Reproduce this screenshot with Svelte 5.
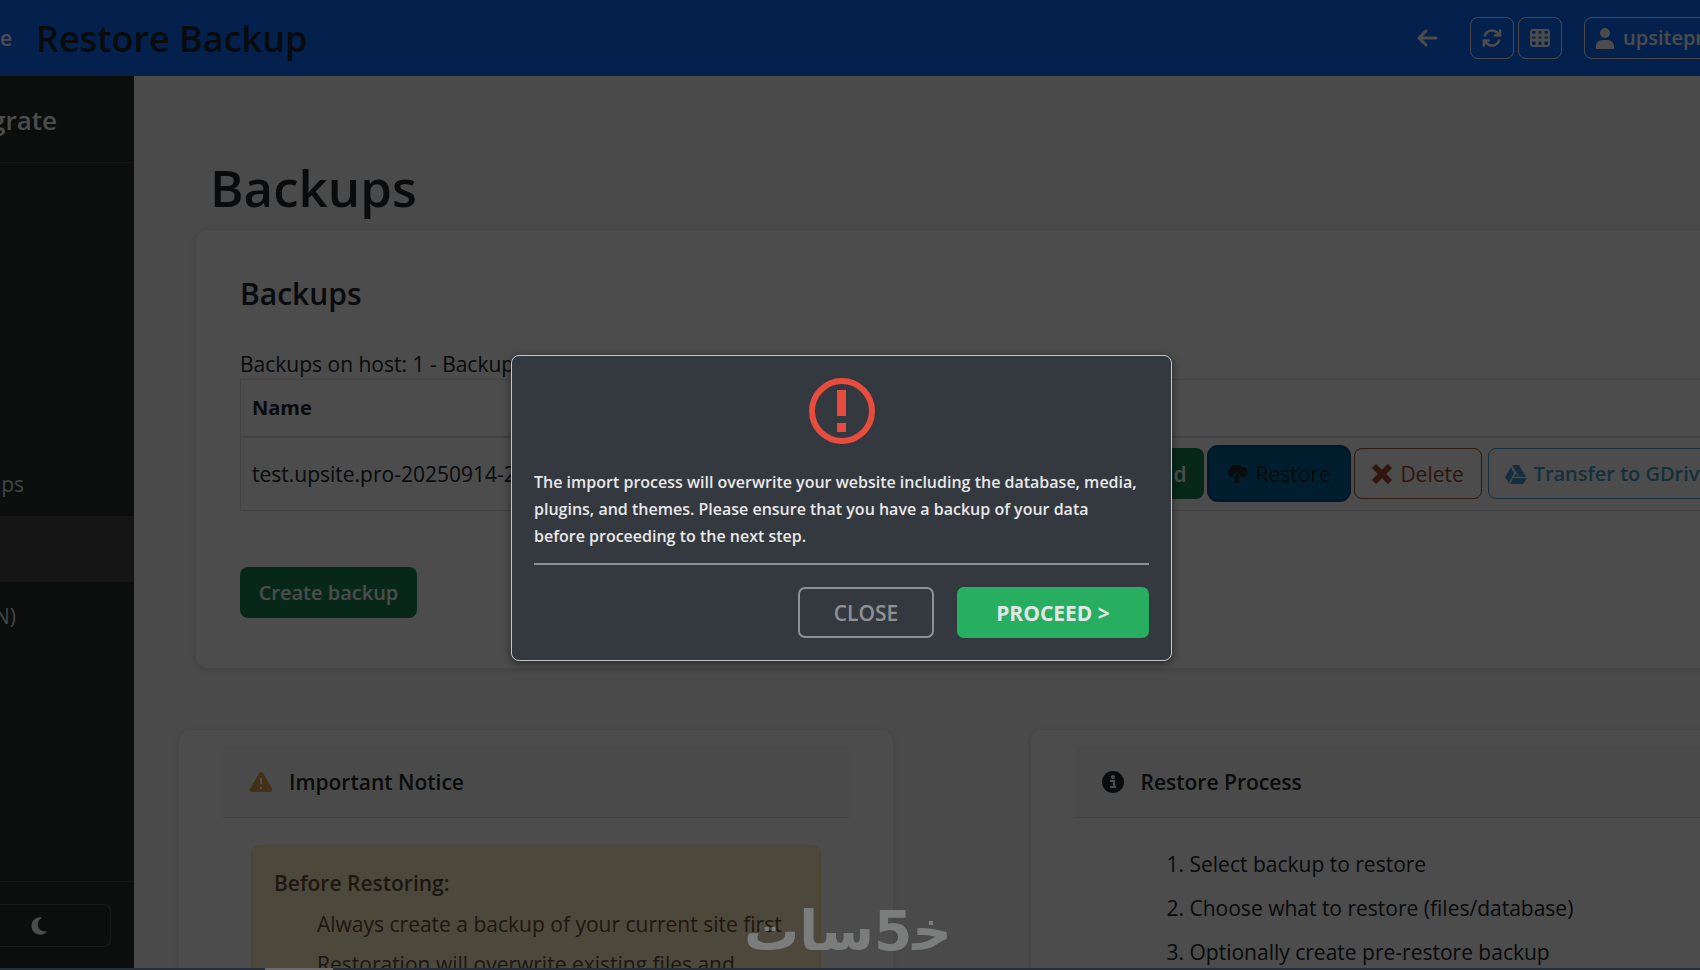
<script>
  const navItems = [
    { label: 'ups', active: false },
    { label: '', active: true },
    { label: 'N)', active: false }
  ];

  const notices = [
    'Always create a backup of your current site first',
    'Restoration will overwrite existing files and'
  ];

  const steps = [
    'Select backup to restore',
    'Choose what to restore (files/database)',
    'Optionally create pre-restore backup'
  ];

  let modalOpen = $state(true);

  function closeModal() {
    modalOpen = false;
  }
</script>

<div class="page">
  <header class="topbar">
    <div class="brand"><span>te</span></div>
    <h1>Restore Backup</h1>
    <nav class="actions">
      <a class="back" href="#back" aria-label="Back">
        <svg viewBox="0 0 22 18" width="22" height="18">
          <path d="M20 9H3M10 2L3 9l7 7" fill="none" stroke="currentColor" stroke-width="3" stroke-linecap="round" stroke-linejoin="round" />
        </svg>
      </a>
      <button class="tool" aria-label="Refresh">
        <svg viewBox="0 0 512 512" width="20" height="20">
          <path fill="currentColor" d="M105.100 202.600c7.700-21.800 20.200-42.300 37.800-59.800c62.500-62.500 163.800-62.500 226.300 0L386.300 160H336c-17.700 0-32 14.300-32 32s14.300 32 32 32H463.500c17.700 0 32-14.300 32-32V64c0-17.700-14.300-32-32-32s-32 14.300-32 32v51.200L414.400 97.600c-87.500-87.500-229.300-87.500-316.800 0C73.200 122 55.600 150.700 44.800 181.400c-5.900 16.700 2.900 34.900 19.500 40.800s34.900-2.900 40.800-19.500zM39 289.300c-5 1.500-9.800 4.200-13.700 8.200c-4 4-6.700 8.800-8.100 14c-.8 3.400-1.200 6.900-1.200 10.500V448c0 17.700 14.300 32 32 32s32-14.300 32-32V396.900l17.600 17.500c87.500 87.400 229.300 87.400 316.700 0c24.400-24.400 42.100-53.100 52.900-83.700c5.900-16.700-2.900-34.900-19.500-40.800s-34.900 2.900-40.800 19.500c-7.700 21.800-20.200 42.300-37.800 59.800c-62.500 62.500-163.800 62.500-226.300 0L125.600 352H176c17.700 0 32-14.300 32-32s-14.300-32-32-32H48.400c-3.200 0-6.400.4-9.400 1.300z" />
        </svg>
      </button>
      <button class="tool" aria-label="Apps">
        <svg viewBox="0 0 20 18" width="20" height="18">
          <rect x="1" y="1" width="18" height="16" rx="2" fill="none" stroke="currentColor" stroke-width="2" />
          <path d="M1 6h18M1 11h18M7 1v16M13 1v16" stroke="currentColor" stroke-width="3" />
        </svg>
      </button>
      <button class="user">
        <svg viewBox="0 0 18 21" width="18" height="21">
          <circle cx="9" cy="5" r="5" fill="currentColor" />
          <path d="M0 21v-3c0-3 3-6 6-6h6c3 0 6 3 6 6v3z" fill="currentColor" />
        </svg>
        <span>upsitepro</span>
      </button>
    </nav>
  </header>

  <div class="body">
    <aside>
      <div class="side-title">grate</div>
      <nav class="side-nav">
        {#each navItems as item}
          <a href="#nav" class:active={item.active} aria-label={item.label || 'Current page'}>{item.label}</a>
        {/each}
      </nav>
      <div class="side-foot">
        <button aria-label="Toggle theme">
          <svg viewBox="0 0 384 512" width="16" height="20">
            <path fill="currentColor" d="M223.500 32C100 32 0 132.300 0 256S100 480 223.500 480c60.600 0 115.500-24.200 155.800-63.400c5-4.900 6.300-12.500 3.100-18.700s-10.100-9.700-17-8.500c-9.800 1.700-19.800 2.600-30.100 2.600c-96.900 0-175.500-78.800-175.500-176c0-65.800 36-123.100 89.300-153.300c6.100-3.500 9.200-10.500 7.700-17.300s-7.300-11.900-14.300-12.500c-6.300-.5-12.600-.8-19-.8z" />
          </svg>
        </button>
      </div>
    </aside>

    <main>
      <h2>Backups</h2>

      <section class="card backups">
        <h3>Backups</h3>
        <p>Backups on host: 1 - Backup</p>
        <table>
          <thead>
            <tr><th class="name">Name</th><th></th></tr>
          </thead>
          <tbody>
            <tr>
              <td class="name">test.upsite.pro-20250914-2</td>
              <td>
                <div class="row-actions">
                  <button class="btn green">d</button>
                  <button class="btn restore">
                    <svg viewBox="0 0 22 18" width="22" height="18">
                      <path fill="currentColor" d="M5 12a5 5 0 0 1-1-9 7 7 0 0 1 12-1 5 5 0 0 1 1 10h-1l-5-5-5 5z" />
                      <path fill="currentColor" d="M11 9l4 4h-2v5H9v-5H7z" />
                    </svg>
                    Restore
                  </button>
                  <button class="btn delete">
                    <svg viewBox="0 0 22 22" width="22" height="22">
                      <path d="M3 3l16 16M19 3L3 19" stroke="currentColor" stroke-width="6" />
                    </svg>
                    Delete
                  </button>
                  <button class="btn drive">
                    <svg viewBox="0 0 22 20" width="22" height="20">
                      <path fill="currentColor" d="M7 1h7l7 12h-7zM6 3l3 6-5 10-4-6zM8 14h14l-4 6H5zM11 9l2 4h-4z" />
                    </svg>
                    Transfer to GDrive
                  </button>
                </div>
              </td>
            </tr>
          </tbody>
        </table>
        <button class="btn green create">Create backup</button>
      </section>

      <div class="columns">
        <section class="card info">
          <h4>
            <svg class="warn" viewBox="0 0 24 20" width="24" height="20">
              <path fill="currentColor" d="M10 1q2-2 4 0l9 16q1 3-2 3H3q-3 0-2-3z" />
              <path d="M12 6v6M12 15v2" stroke="#fff" stroke-width="2" />
            </svg>
            Important Notice
          </h4>
          <div class="alert">
            <strong>Before Restoring:</strong>
            <ul>
              {#each notices as notice}
                <li>{notice}</li>
              {/each}
            </ul>
          </div>
        </section>

        <section class="card info">
          <h4>
            <svg viewBox="0 0 24 24" width="24" height="24">
              <circle cx="12" cy="12" r="11" fill="currentColor" />
              <circle cx="12" cy="7" r="2" fill="#fff" />
              <path d="M9 11h4v6M9 17h6" fill="none" stroke="#fff" stroke-width="2" />
            </svg>
            Restore Process
          </h4>
          <ol>
            {#each steps as step}
              <li>{step}</li>
            {/each}
          </ol>
        </section>
      </div>
    </main>
  </div>

  {#if modalOpen}
    <div class="overlay">
      <div class="modal" role="dialog" aria-modal="true" aria-describedby="modal-text">
        <svg class="alert-icon" viewBox="0 0 66 66" width="66" height="66">
          <circle cx="33" cy="33" r="30" fill="none" stroke="#e74c3c" stroke-width="6" />
          <path d="M28 12h9v26h-9zM28 45h9v9h-9z" fill="#e74c3c" />
        </svg>
        <p id="modal-text">
          The import process will overwrite your website including the database, media,
          plugins, and themes. Please ensure that you have a backup of your data<br />
          before proceeding to the next step.
        </p>
        <div class="modal-actions">
          <button class="close" onclick={closeModal}>CLOSE</button>
          <button class="proceed" onclick={closeModal}>PROCEED &gt;</button>
        </div>
      </div>
    </div>
  {/if}

  <div class="watermark" dir="rtl">خ&zwj;5سات</div>
  <div class="progress"><span></span></div>
</div>

<style>
  :global(body) {
    margin: 0;
    font-family: 'Open Sans', 'Noto Sans', sans-serif;
    font-size: 21px;
    line-height: 30px;
    color: #212529;
  }

  .page {
    position: relative;
    display: flex;
    flex-direction: column;
    height: 100vh;
    overflow: hidden;
    background: #f8f8f8;
  }

  .page * {
    box-sizing: border-box;
  }

  button {
    font: inherit;
    cursor: pointer;
  }

  h1, h2, h3, h4, p {
    margin: 0;
  }

  svg {
    display: block;
    flex: none;
  }

  .topbar {
    display: flex;
    flex: none;
    align-items: center;
    height: 76px;
    overflow: hidden;
    background: #0d6efd;
    color: #fff;
  }

  .brand {
    display: flex;
    justify-content: flex-end;
    width: 12px;
    overflow: hidden;
    font-weight: 600;
  }

  h1 {
    margin-left: 24px;
    padding-top: 2px;
    font-size: 36px;
    font-weight: 600;
    line-height: 50px;
    color: #212529;
  }

  .actions {
    display: flex;
    align-items: center;
    margin-left: auto;
    margin-right: -48px;
  }

  .back {
    margin-right: 32px;
    color: #fff;
  }

  .tool,
  .user {
    display: flex;
    align-items: center;
    justify-content: center;
    height: 42px;
    padding: 0;
    border: 1px solid #f8f9fa;
    border-radius: 8px;
    background: none;
    color: #fff;
  }

  .tool {
    width: 44px;
    margin-right: 4px;
  }

  .user {
    gap: 9px;
    width: 164px;
    margin-left: 18px;
    padding-left: 11px;
    justify-content: flex-start;
    font-size: 20px;
    font-weight: 600;
  }

  .body {
    display: flex;
    flex: 1;
    min-height: 0;
  }

  aside {
    display: flex;
    flex: none;
    flex-direction: column;
    width: 134px;
    overflow: hidden;
    background: #282e2c;
    color: #fff;
  }

  .side-title {
    display: flex;
    align-items: center;
    justify-content: flex-end;
    height: 87px;
    padding: 2px 77px 0 0;
    border-bottom: 1px solid #454545;
    font-size: 26px;
    font-weight: 600;
  }

  .side-nav {
    margin-top: 287px;
  }

  .side-nav a {
    display: flex;
    align-items: center;
    width: 24px;
    height: 66px;
    padding-top: 2px;
    justify-content: flex-end;
    color: #dee2e6;
    text-decoration: none;
  }

  .side-nav a.active {
    width: 100%;
    background: #4b4646;
  }

  .side-nav a:last-child {
    width: 16px;
  }

  .side-foot {
    margin-top: auto;
    padding: 22px 23px 23px 0;
    border-top: 1px solid #454545;
  }

  .side-foot button {
    display: flex;
    align-items: center;
    width: 100%;
    height: 43px;
    padding: 0 0 0 31px;
    border: 1px solid #5c5555;
    border-left: 0;
    border-radius: 0 8px 8px 0;
    background: none;
    color: #fff;
  }

  main {
    flex: 1;
    min-width: 0;
    padding: 77px 0 0 44px;
    overflow: hidden;
  }

  h2 {
    margin-left: 32px;
    font-size: 51px;
    font-weight: 600;
    line-height: 68px;
  }

  .card {
    border: 1px solid #ececec;
    border-radius: 12px;
    background: #fdfdfd;
    box-shadow: 0 2px 6px rgba(0, 0, 0, 0.1);
  }

  .backups {
    height: 440px;
    margin: 8px -48px 0 17px;
    padding: 41px 44px 0;
  }

  h3 {
    margin-bottom: 32px;
    font-size: 30px;
    font-weight: 600;
    line-height: 46px;
  }

  table {
    width: 100%;
    border: 1px solid #dee2e6;
    border-collapse: collapse;
    table-layout: fixed;
  }

  th, td {
    padding: 0;
    text-align: left;
    white-space: nowrap;
  }

  th {
    height: 57px;
    border-bottom: 2px solid #dee2e6;
    font-size: 20px;
    font-weight: 700;
  }

  td {
    height: 74px;
  }

  .name {
    width: 800px;
    padding-left: 11px;
  }

  .row-actions {
    display: flex;
    gap: 6px;
    margin-left: 116px;
  }

  .btn {
    display: inline-flex;
    flex: none;
    align-items: center;
    justify-content: center;
    gap: 7px;
    height: 51px;
    padding: 0 16px;
    border: 1px solid transparent;
    border-radius: 8px;
    font-weight: 600;
    white-space: nowrap;
  }

  .green {
    background: #198754;
    color: #fff;
  }

  .restore {
    width: 138px;
    background: #04669e;
    color: #212529;
    box-shadow: 0 0 0 3px #04538a;
    font-weight: 400;
  }

  .delete {
    width: 128px;
    border-color: #a3542f;
    background: none;
    color: #a3452b;
    font-weight: 400;
  }

  .drive {
    border-color: #4a9fd0;
    background: none;
    color: #4a9fd0;
    font-size: 20px;
  }

  .create {
    width: 177px;
    margin-top: 56px;
    font-size: 20px;
  }

  .columns {
    display: grid;
    grid-template-columns: 1fr 1fr;
    gap: 136px;
    margin: 60px -45px 0 0;
  }

  .info {
    height: 400px;
    padding: 16px 44px;
  }

  h4 {
    display: flex;
    align-items: center;
    gap: 16px;
    height: 72px;
    padding-left: 26px;
    border-bottom: 1px solid #e2e2e2;
    background: #f7f7f7;
    font-size: 21px;
    font-weight: 600;
  }

  .warn {
    color: #e0a04c;
  }

  .alert {
    height: 300px;
    margin: 27px 28px 0;
    padding: 22px 22px 0;
    border: 1px solid #ffe69c;
    border-radius: 8px;
    background: #fff0c8;
    color: #664d3a;
  }

  .alert strong {
    font-weight: 600;
  }

  ul, ol {
    margin: 0;
    padding: 0;
    list-style: none;
  }

  ul {
    margin: 6px -22px 0 43px;
  }

  ul li {
    line-height: 40px;
    white-space: nowrap;
  }

  ol {
    margin: 24px 0 0 115px;
    list-style: decimal;
  }

  ol li {
    line-height: 44px;
  }

  .overlay {
    position: absolute;
    inset: 0;
    display: flex;
    align-items: center;
    justify-content: center;
    padding: 45px 17px 0 0;
    background: rgba(0, 0, 0, 0.7);
  }

  .modal {
    width: 661px;
    max-width: 100%;
    padding: 22px;
    border: 1px solid #c4c8ca;
    border-radius: 8px;
    background: #343940;
    box-shadow: 0 2px 8px rgba(0, 0, 0, 0.5);
    color: #e8e8e8;
  }

  .alert-icon {
    margin: 0 auto 25px;
  }

  .modal p {
    padding-bottom: 13px;
    border-bottom: 2px solid #8f9295;
    font-size: 16px;
    font-weight: 600;
    line-height: 27px;
  }

  .modal-actions {
    display: flex;
    justify-content: flex-end;
    gap: 23px;
    margin-top: 22px;
  }

  .modal-actions button {
    height: 51px;
    padding: 2px 0 0;
    border-radius: 7px;
  }

  .close {
    width: 136px;
    border: 2px solid #8f9295;
    background: none;
    color: #8f9295;
    font-weight: 600;
  }

  .proceed {
    width: 192px;
    border: 0;
    background: #27ae60;
    color: #e4e6e5;
    font-weight: 700;
  }

  .watermark {
    position: absolute;
    right: 748px;
    bottom: 4px;
    font-family: 'DejaVu Sans', sans-serif;
    font-size: 55px;
    font-weight: 700;
    line-height: 70px;
    color: #7b7c7c;
    pointer-events: none;
  }

  .progress {
    position: absolute;
    right: 0;
    bottom: 0;
    left: 0;
    height: 2px;
    padding-left: 265px;
    background: #22303d;
  }

  .progress span {
    display: block;
    width: 68px;
    height: 2px;
    background: #6b6b6b;
  }
</style>
